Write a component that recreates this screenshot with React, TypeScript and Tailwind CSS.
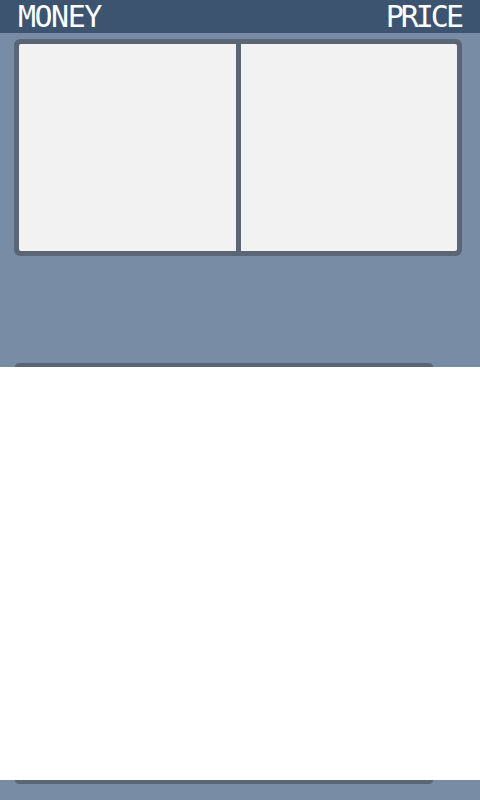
import React from 'react';

const App = () => {
  return (
    <div className="w-[480px] h-[800px] bg-[#788da5] flex flex-col overflow-hidden">
      {/* Top bar */}
      <div className="h-[33px] bg-[#3c5470] flex items-center justify-between pl-[18px] pr-[19px]">
        <span className="text-white text-[30px] leading-none tracking-[-1.5px] font-['DejaVu_Sans_Mono',monospace]">MONEY</span>
        <span className="text-white text-[30px] leading-none tracking-[-3px] font-['DejaVu_Sans_Mono',monospace]">PRICE</span>
      </div>

      {/* Two slots */}
      <div className="mt-[6px] ml-[14px] w-[448px] h-[217px] border-[5px] border-[#5a6675] rounded-[6px] bg-[#5a6675] flex gap-[5px]">
        <div className="flex-1 bg-[#f2f2f2] rounded-tl-[2px] rounded-bl-[2px]" />
        <div className="flex-1 bg-[#f2f2f2] rounded-tr-[2px] rounded-br-[2px]" />
      </div>

      {/* List area */}
      <div className="mt-[107px] flex flex-col">
        <div className="ml-[15px] w-[418px] h-[4px] bg-[#5a6675] rounded-t-[4px]" />
        <div className="h-[413px] bg-white" />
        <div className="ml-[15px] w-[418px] h-[4px] bg-[#5a6675] rounded-b-[4px]" />
      </div>
    </div>
  );
};

export default App;
